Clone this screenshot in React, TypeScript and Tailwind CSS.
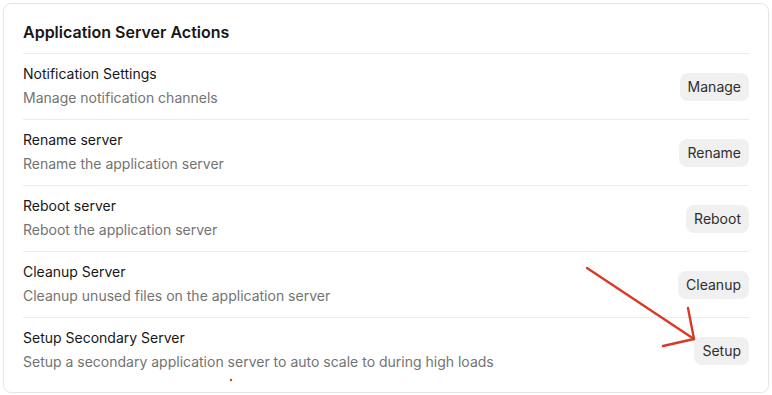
import React from 'react';

interface ActionRowProps {
  title: string;
  description: string;
  action: string;
  last?: boolean;
}

const ActionRow: React.FC<ActionRowProps> = ({ title, description, action, last }) => {
  return (
    <div className={`flex items-center justify-between pt-[10px] pb-[11px] ${last ? '' : 'border-b border-[#ebebeb]'}`}>
      <div className="flex flex-col gap-1">
        <span className="text-sm leading-5 text-[#171717]">{title}</span>
        <span className="text-sm leading-5 text-[#737373]">{description}</span>
      </div>
      <button className="mt-[2px] rounded-lg bg-[#f0f0f0] px-2 py-1 text-sm leading-5 text-[#2e2e2e]">
        {action}
      </button>
    </div>
  );
};

const rows = [
  { title: 'Notification Settings', description: 'Manage notification channels', action: 'Manage' },
  { title: 'Rename server', description: 'Rename the application server', action: 'Rename' },
  { title: 'Reboot server', description: 'Reboot the application server', action: 'Reboot' },
  { title: 'Cleanup Server', description: 'Cleanup unused files on the application server', action: 'Cleanup' },
  {
    title: 'Setup Secondary Server',
    description: 'Setup a secondary application server to auto scale to during high loads',
    action: 'Setup',
  },
];

export default function App() {
  return (
    <div className="relative h-[395px] w-[772px] bg-white p-[3px]" style={{ fontFamily: 'Inter, "Noto Sans", sans-serif' }}>
      <div className="rounded-lg border border-[#e6e6e6] bg-white pl-[19px] pr-[19px] pt-4 pb-[9px]">
        <h2 className="border-b border-[#ebebeb] pb-[9px] text-base font-semibold leading-6 text-[#171717]">
          Application Server Actions
        </h2>
        {rows.map((r, i) => (
          <ActionRow key={r.title} {...r} last={i === rows.length - 1} />
        ))}
      </div>

      {/* annotation arrow */}
      <svg className="pointer-events-none absolute inset-0" width="772" height="395" viewBox="0 0 772 395">
        <g stroke="#d93a26" strokeWidth="2.4" strokeLinecap="round" fill="none">
          <line x1="587" y1="268" x2="694" y2="339" />
          <line x1="688" y1="308" x2="694" y2="339" />
          <line x1="663" y1="346" x2="694" y2="339" />
        </g>
        <circle cx="231" cy="380" r="1.2" fill="#d93a26" />
      </svg>
    </div>
  );
}
